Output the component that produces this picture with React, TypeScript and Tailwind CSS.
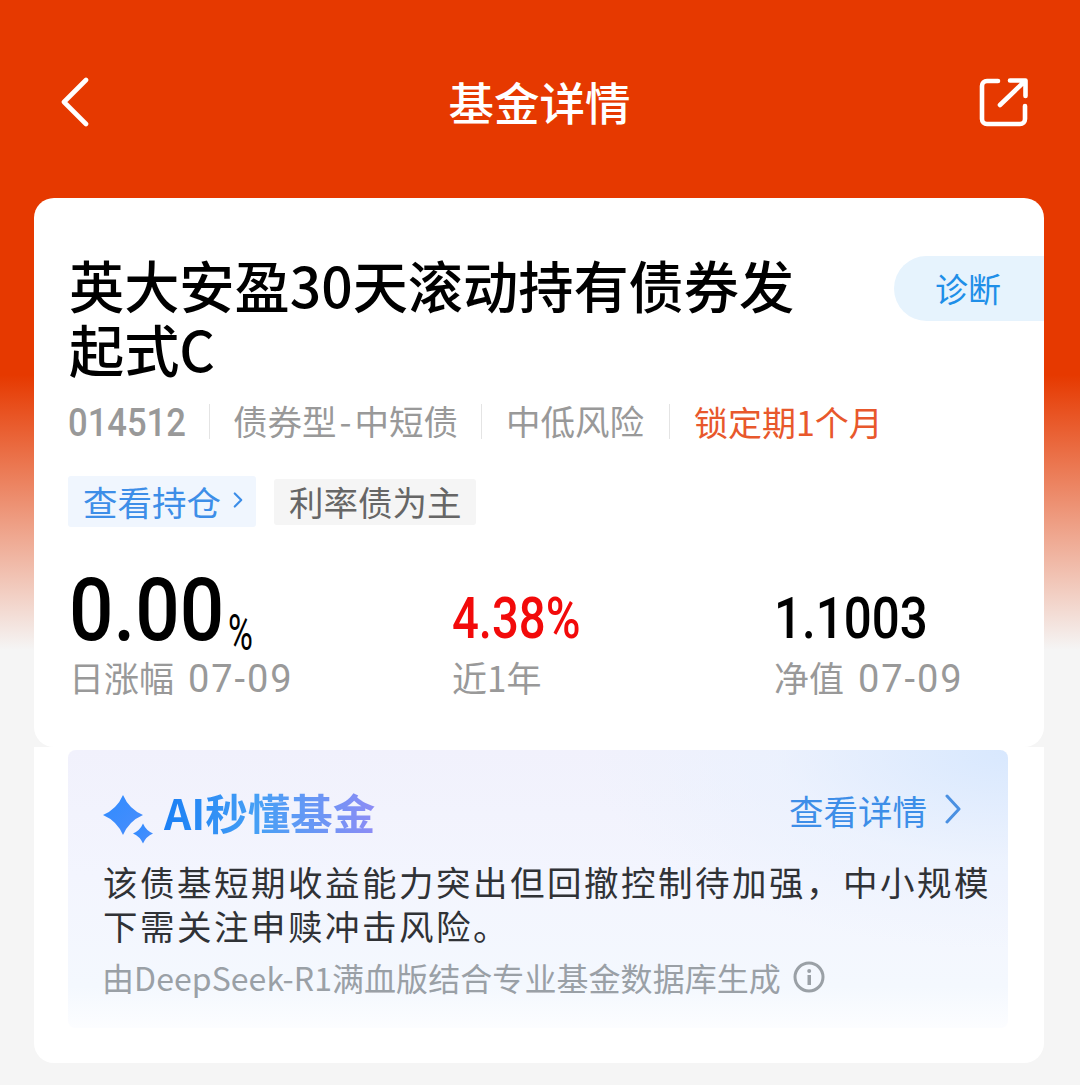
import { ChevronRight } from 'lucide-react'

const cjk = { fontFamily: '"Noto Sans CJK SC", sans-serif' }
const num = { fontFamily: 'Roboto, "Noto Sans CJK SC", sans-serif' }

function BackIcon() {
  return (
    <svg width="28" height="50" viewBox="0 0 28 50" fill="none" stroke="white" strokeWidth="4.6" strokeLinecap="round" strokeLinejoin="round">
      <path d="M25 3 3 25l22 22" />
    </svg>
  )
}

function ShareIcon() {
  return (
    <svg width="50" height="50" viewBox="0 0 50 50" fill="none" stroke="white" strokeWidth="4.6" strokeLinecap="round" strokeLinejoin="round">
      <path d="M19 4H8a5 5 0 0 0-5 5v33a5 5 0 0 0 5 5h33a5 5 0 0 0 5-5V29" />
      <path d="M21 28 46 4M31 3.5h15.5V19" />
    </svg>
  )
}

function Sparkle() {
  return (
    <svg className="self-start mt-[8px]" width="54" height="49" viewBox="0 0 54 49">
      <defs>
        <linearGradient id="sp" x1="0" y1="0" x2="1" y2="1">
          <stop offset="0" stopColor="#2f8cff" />
          <stop offset="1" stopColor="#4a8dfc" />
        </linearGradient>
      </defs>
      <path d="M21 0Q27 14 41 20Q27 26 21 40Q15 26 1 20Q15 14 21 0Z" fill="url(#sp)" />
      <path d="M41 28.5Q44 35.5 51 38.5Q44 41.5 41 48.5Q38 41.5 31 38.5Q38 35.5 41 28.5Z" fill="url(#sp)" />
    </svg>
  )
}

function Divider() {
  return <div className="w-px h-[35px] bg-[#e4e4e4]" />
}

function DateLabel({ label, date }: { label: string; date: string }) {
  return (
    <div className="mt-[3px] text-[35px] leading-[44px] text-[#999999] flex items-baseline">
      {label}
      <span className="ml-[14px] text-[38px] tracking-[1.9px]" style={num}>{date}</span>
    </div>
  )
}

export default function App() {
  return (
    <div
      className="w-[1080px] h-[1085px] overflow-hidden bg-[linear-gradient(180deg,#e63900_0px,#e63900_375px,#f5f5f5_650px,#f5f5f5_1085px)]"
      style={cjk}
    >
      {/* Header */}
      <div className="h-[198px] pl-[61px] pr-[51px] pt-[6px] flex items-center justify-between text-white">
        <div className="w-[39px]">
          <BackIcon />
        </div>
        <h1 className="text-[45.5px] font-medium leading-none">基金详情</h1>
        <ShareIcon />
      </div>

      {/* Fund card */}
      <div className="ml-[34px] w-[1010px] h-[549px] bg-white rounded-[20px] relative pl-[35px] pt-[54px]">
        <h2 className="text-[55.2px] leading-[64px] font-medium text-black w-[760px]">英大安盈30天滚动持有债券发起式C</h2>
        <div className="absolute right-0 top-[58px] w-[150px] h-[65px] rounded-l-[33px] bg-[#e6f3fd] flex items-center pl-[41px] text-[33px] text-[#1f8fe8]">
          诊断
        </div>

        <div className="mt-[23px] h-[36px] flex items-center text-[34.5px] text-[#999999] -ml-[1px]">
          <span className="font-medium w-[141px] text-[38px] inline-block origin-left scale-x-[.91] translate-y-[2px]" style={num}>014512</span>
          <Divider />
          <span className="ml-[23px] w-[248px]">债券型<span className="mx-[3px]">-</span>中短债</span>
          <Divider />
          <span className="ml-[24px] w-[163px]">中低风险</span>
          <Divider />
          <span className="ml-[24px] text-[34px] text-[#e8582c]">锁定期1个月</span>
        </div>

        <div className="mt-[37px] flex items-center -ml-[1px]">
          <div className="h-[51px] w-[188px] bg-[#f0f6fe] rounded-[3px] flex items-center pl-[15px] text-[34.5px] text-[#3d8ee8]">
            查看持仓
            <ChevronRight className="w-[26px] h-[26px] ml-[4px] -mt-[3px]" strokeWidth={2} />
          </div>
          <div className="ml-[18px] h-[46px] w-[202px] bg-[#f5f5f5] rounded-[3px] flex items-center pl-[15px] text-[34.5px] text-[#666666]">
            利率债为主
          </div>
        </div>

        <div className="mt-[41px] flex">
          <div className="w-[383px]">
            <div className="h-[84px] flex items-end text-black font-medium" style={num}>
              <span className="w-[159px] text-[87px] leading-[84px] inline-block origin-left scale-x-[.9]">0.00</span>
              <span className="text-[50px] leading-[36px] font-normal inline-block origin-left scale-x-[.68] -translate-y-[1px]">%</span>
            </div>
            <DateLabel label="日涨幅" date="07-09" />
          </div>
          <div className="w-[322px]">
            <div className="h-[84px] flex items-end">
              <span className="text-[58px] leading-[66px] font-medium text-[#f20a0a] inline-block origin-left scale-x-[.815] -translate-y-px" style={num}>4.38%</span>
            </div>
            <div className="mt-[3px] text-[35px] leading-[44px] text-[#999999]">近1年</div>
          </div>
          <div>
            <div className="h-[84px] flex items-end">
              <span className="text-[58px] leading-[66px] font-medium text-black inline-block origin-left scale-x-[.85] -translate-y-px" style={num}>1.1003</span>
            </div>
            <DateLabel label="净值" date="07-09" />
          </div>
        </div>
      </div>

      {/* AI summary card */}
      <div className="ml-[34px] w-[1010px] h-[316px] bg-white rounded-b-[20px] pl-[34px] pt-[3px]">
        <div className="w-[940px] h-[278px] rounded-[8px] bg-[radial-gradient(ellipse_420px_200px_at_100%_0%,#d8e8fe_0%,rgba(232,241,254,0.6)_55%,rgba(240,245,254,0)_100%),linear-gradient(180deg,#f1f1fc_0%,#f3f5fe_45%,#f4f8fe_85%,#fcfdff_100%)] pl-[34px] pt-[37px]">
          <div className="flex items-center h-[50px]">
            <Sparkle />
            <span className="ml-[8px] text-[42.5px] leading-[50px] font-bold text-transparent bg-clip-text bg-[linear-gradient(90deg,#1a7ff5_0%,#47a0f5_45%,#8d8cf5_100%)]">
              AI秒懂基金
            </span>
            <span className="ml-auto text-[34.5px] text-[#3d8ee8] leading-[50px] -mt-[4px]">查看详情</span>
            <svg className="ml-[18px] mr-[47px] -mt-[7px]" width="16" height="32" viewBox="0 0 16 32" fill="none" stroke="#4a90e2" strokeWidth="3" strokeLinecap="round" strokeLinejoin="round">
              <path d="M2 3l12 13L2 29" />
            </svg>
          </div>
          <p className="mt-[22px] ml-[1px] w-[900px] text-[34.5px] leading-[44px] tracking-[2.5px] text-[#303236]">
            该债基短期收益能力突出但回撤控制待加强，中小规模下需关注申赎冲击风险。
          </p>
          <div className="mt-[8px] flex items-center text-[32px] leading-[44px] tracking-[0.07px] text-[#9aa0a6]">
            由DeepSeek-R1满血版结合专业基金数据库生成
            <svg className="ml-[12px]" width="32" height="32" viewBox="0 0 32 32" fill="none">
              <circle cx="16" cy="16" r="14" stroke="#9aa0a6" strokeWidth="3" />
              <rect x="14.5" y="14" width="3.5" height="10" fill="#9aa0a6" />
              <circle cx="16.2" cy="10" r="2" fill="#9aa0a6" />
            </svg>
          </div>
        </div>
      </div>
    </div>
  )
}
